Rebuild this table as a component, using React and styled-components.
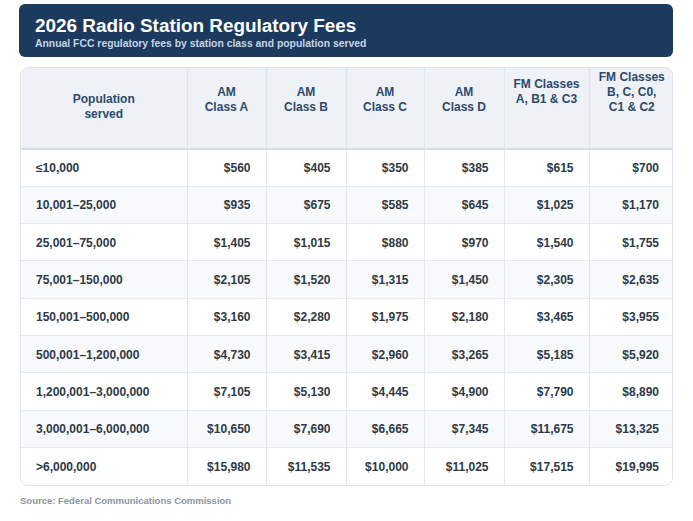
import React from 'react';
import styled, { createGlobalStyle } from 'styled-components';

const GlobalStyle = createGlobalStyle`
  html, body {
    margin: 0;
    padding: 0;
    background: #ffffff;
  }
  body {
    font-family: "Liberation Sans", Arial, Helvetica, sans-serif;
    -webkit-font-smoothing: antialiased;
  }
`;

const Page = styled.div`
  width: 693px;
  height: 521px;
  box-sizing: border-box;
  padding: 4px 20px 0 19px;
  display: flex;
  flex-direction: column;
`;

const TitleBar = styled.header`
  background: #1c3a5d;
  border-radius: 6px;
  height: 53px;
  box-sizing: border-box;
  padding: 11px 16px 0;
  display: flex;
  flex-direction: column;
`;

const Title = styled.h1`
  margin: 0;
  color: #ffffff;
  font-size: 18.9px;
  line-height: 22px;
  font-weight: 700;
`;

const Subtitle = styled.p`
  margin: 1px 0 0;
  color: #c6d4e4;
  font-size: 10.4px;
  line-height: 12px;
  font-weight: 700;
`;

const TableWrap = styled.div`
  margin: 10px 0 0 1px;
  border: 1px solid #dfe5ec;
  border-radius: 8px;
  overflow: hidden;
`;

const Table = styled.table`
  width: 100%;
  border-collapse: collapse;
  table-layout: fixed;
`;

const HeadCell = styled.th`
  background: #eef2f7;
  color: #2b4a6c;
  font-size: 12px;
  line-height: 15px;
  font-weight: 700;
  text-align: center;
  vertical-align: top;
  height: 81px;
  box-sizing: border-box;
  padding: ${p => p.$top}px 6px 0;
  border-left: 1px solid #dfe5ec;
  border-bottom: 2px solid #d3dce6;
  &:first-child {
    border-left: none;
  }
`;

const Row = styled.tr`
  background: ${p => (p.$striped ? '#f7f9fb' : '#ffffff')};
  &:not(:last-child) td {
    border-bottom: 1px solid #e3e8ee;
  }
`;

const Cell = styled.td`
  height: 37.3px;
  box-sizing: border-box;
  padding: 1px 15px 0;
  color: #2e3947;
  font-size: 12px;
  font-weight: 700;
  text-align: ${p => (p.$label ? 'left' : 'right')};
  vertical-align: middle;
  border-left: 1px solid #e3e8ee;
  &:first-child {
    border-left: none;
  }
`;

const Source = styled.p`
  margin: 9px 0 0 1px;
  color: #8a95a1;
  font-size: 9.5px;
  font-weight: 700;
`;

const columns = [
  { width: 166, top: 24, lines: ['Population', 'served'] },
  { width: 79, top: 17, lines: ['AM', 'Class A'] },
  { width: 80, top: 17, lines: ['AM', 'Class B'] },
  { width: 78, top: 17, lines: ['AM', 'Class C'] },
  { width: 80, top: 17, lines: ['AM', 'Class D'] },
  { width: 85, top: 9, lines: ['FM Classes', 'A, B1 & C3'] },
  { width: 85, top: 2, lines: ['FM Classes', 'B, C, C0,', 'C1 & C2'] },
];

const rows = [
  ['≤10,000', '$560', '$405', '$350', '$385', '$615', '$700'],
  ['10,001–25,000', '$935', '$675', '$585', '$645', '$1,025', '$1,170'],
  ['25,001–75,000', '$1,405', '$1,015', '$880', '$970', '$1,540', '$1,755'],
  ['75,001–150,000', '$2,105', '$1,520', '$1,315', '$1,450', '$2,305', '$2,635'],
  ['150,001–500,000', '$3,160', '$2,280', '$1,975', '$2,180', '$3,465', '$3,955'],
  ['500,001–1,200,000', '$4,730', '$3,415', '$2,960', '$3,265', '$5,185', '$5,920'],
  ['1,200,001–3,000,000', '$7,105', '$5,130', '$4,445', '$4,900', '$7,790', '$8,890'],
  ['3,000,001–6,000,000', '$10,650', '$7,690', '$6,665', '$7,345', '$11,675', '$13,325'],
  ['>6,000,000', '$15,980', '$11,535', '$10,000', '$11,025', '$17,515', '$19,995'],
];

export default function App() {
  return (
    <>
      <GlobalStyle />
      <Page>
        <TitleBar>
          <Title>2026 Radio Station Regulatory Fees</Title>
          <Subtitle>Annual FCC regulatory fees by station class and population served</Subtitle>
        </TitleBar>
        <TableWrap>
          <Table>
            <colgroup>
              {columns.map((c, i) => (
                <col key={i} style={{ width: c.width }} />
              ))}
            </colgroup>
            <thead>
              <tr>
                {columns.map((c, i) => (
                  <HeadCell key={i} $top={c.top}>
                    {c.lines.map((l, j) => (
                      <div key={j}>{l}</div>
                    ))}
                  </HeadCell>
                ))}
              </tr>
            </thead>
            <tbody>
              {rows.map((r, i) => (
                <Row key={i} $striped={i % 2 === 1}>
                  {r.map((v, j) => (
                    <Cell key={j} $label={j === 0}>{v}</Cell>
                  ))}
                </Row>
              ))}
            </tbody>
          </Table>
        </TableWrap>
        <Source>Source: Federal Communications Commission</Source>
      </Page>
    </>
  );
}
